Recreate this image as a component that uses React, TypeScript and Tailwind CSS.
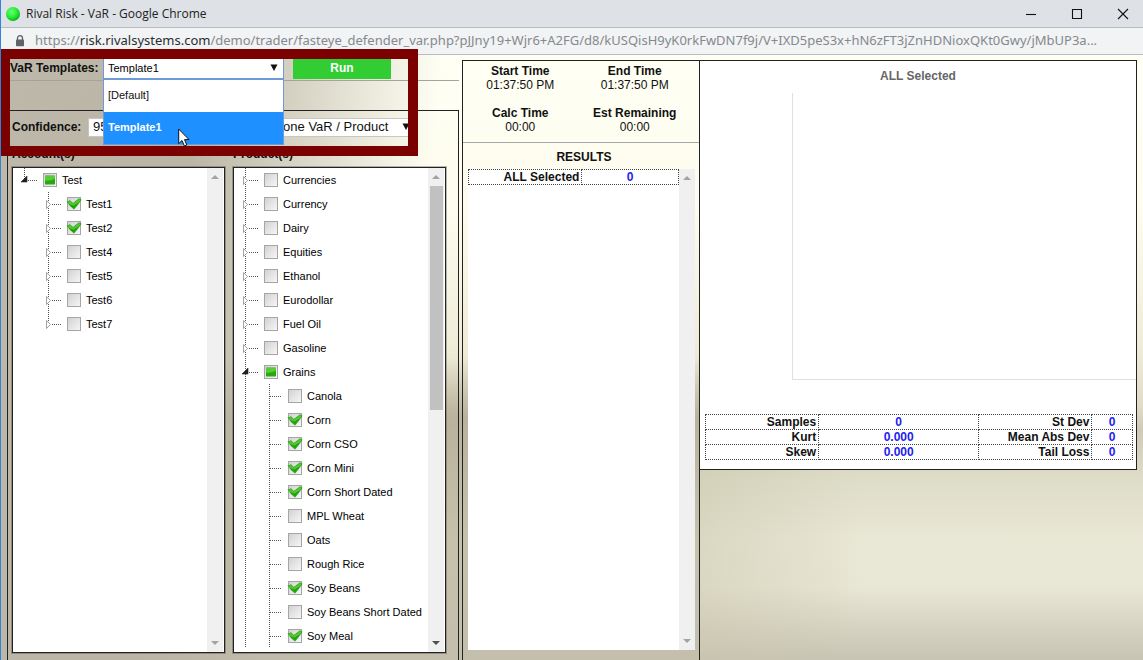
import { useEffect, useId, useRef } from "react";

type Mark = "off" | "on" | "mixed";
type Arrow = "closed" | "open" | "none";

interface TreeItem {
  label: string;
  mark: Mark;
  arrow: Arrow;
  depth: number;
  line: "full" | "end";
}

const accounts: TreeItem[] = [
  { label: "Test", mark: "mixed", arrow: "open", depth: 0, line: "end" },
  { label: "Test1", mark: "on", arrow: "closed", depth: 1, line: "full" },
  { label: "Test2", mark: "on", arrow: "closed", depth: 1, line: "full" },
  { label: "Test4", mark: "off", arrow: "closed", depth: 1, line: "full" },
  { label: "Test5", mark: "off", arrow: "closed", depth: 1, line: "full" },
  { label: "Test6", mark: "off", arrow: "closed", depth: 1, line: "full" },
  { label: "Test7", mark: "off", arrow: "closed", depth: 1, line: "end" },
];

const closedGroups = ["Currencies", "Currency", "Dairy", "Equities", "Ethanol", "Eurodollar", "Fuel Oil", "Gasoline"];

const grains: [string, Mark][] = [
  ["Canola", "off"],
  ["Corn", "on"],
  ["Corn CSO", "on"],
  ["Corn Mini", "on"],
  ["Corn Short Dated", "on"],
  ["MPL Wheat", "off"],
  ["Oats", "off"],
  ["Rough Rice", "off"],
  ["Soy Beans", "on"],
  ["Soy Beans Short Dated", "off"],
  ["Soy Meal", "on"],
];

const products: TreeItem[] = [
  ...closedGroups.map((label): TreeItem => ({ label, mark: "off", arrow: "closed", depth: 0, line: "full" })),
  { label: "Grains", mark: "mixed", arrow: "open", depth: 0, line: "full" },
  ...grains.map(([label, mark]): TreeItem => ({ label, mark, arrow: "none", depth: 1, line: "full" })),
];

function Connector({ arrow, line }: { arrow: Arrow; line: TreeItem["line"] }) {
  return (
    <svg className="h-6 w-6 shrink-0" viewBox="0 0 24 24" aria-hidden="true" shapeRendering="crispEdges">
      <path d={line === "end" ? "M5.5 0V12" : "M5.5 0V24"} stroke="#555" strokeDasharray="1 1" fill="none" />
      <path d={arrow === "none" ? "M6 12.5H18" : "M9 12.5H18"} stroke="#555" strokeDasharray="1 1" fill="none" />
      {arrow === "closed" && (
        <path d="M3.5 8.5L7.5 12.5L3.5 16.5Z" fill="#fff" stroke="#999" strokeWidth="0.9" shapeRendering="auto" />
      )}
      {arrow === "open" && <path d="M2 14L8 8V14Z" fill="#222" stroke="#222" strokeWidth="0.6" shapeRendering="auto" />}
    </svg>
  );
}

function Guide({ show }: { show: boolean }) {
  return (
    <svg className="h-6 w-6 shrink-0" viewBox="0 0 24 24" aria-hidden="true" shapeRendering="crispEdges">
      {show && <path d="M5.5 0V24" stroke="#555" strokeDasharray="1 1" fill="none" />}
    </svg>
  );
}

function TreeRow({ item, guide }: { item: TreeItem; guide: boolean }) {
  const id = useId();
  const box = useRef<HTMLInputElement>(null);
  useEffect(() => {
    if (box.current) box.current.indeterminate = item.mark === "mixed";
  }, [item.mark]);
  return (
    <li className="flex h-6 items-center">
      {item.depth === 1 && <Guide show={guide} />}
      <Connector arrow={item.arrow} line={item.line} />
      <span className="grid h-3.5 w-3.5 shrink-0 place-items-center">
        <input
          ref={box}
          id={id}
          type="checkbox"
          defaultChecked={item.mark === "on"}
          className="peer col-start-1 row-start-1 h-3.5 w-3.5 appearance-none border border-[#a5a5a5] bg-linear-to-br from-[#d2d2d2] to-[#f6f6f6]"
        />
        <svg
          className="pointer-events-none col-start-1 row-start-1 hidden h-3.5 w-3.5 overflow-visible peer-checked:block"
          viewBox="0 0 14 14"
          aria-hidden="true"
        >
          <path d="M-0.4 4.8L2.8 3.2L6 6L12 1.2L14.6 2.8Q11.4 7.6 7 12.4Q2.8 9.6 -0.4 4.8Z" fill="#23a30c" />
          <path d="M0.5 5L2.8 4L6 6.8L12 2L13.6 3L11.6 5.4L6.4 8.6L2 7Z" fill="#55c934" />
        </svg>
        <svg
          className="pointer-events-none col-start-1 row-start-1 hidden h-3.5 w-3.5 peer-indeterminate:block"
          viewBox="0 0 14 14"
          aria-hidden="true"
        >
          <rect x="2" y="2.6" width="10" height="8.8" rx="0.6" fill="#26a80e" />
          <path d="M2 3H12V5.6Q7 8.6 2 7.6Z" fill="#58cc38" />
        </svg>
      </span>
      <label htmlFor={id} className="pl-[5px] text-[11px] leading-4 whitespace-nowrap text-black">
        {item.label}
      </label>
    </li>
  );
}

function ScrollArrow({ up, color }: { up?: boolean; color: string }) {
  return (
    <svg className="mx-auto h-[18px] w-2 shrink-0" viewBox="0 0 8 18" aria-hidden="true">
      <path d={up ? "M0 11L4 7L8 11Z" : "M0 7L4 11L8 7Z"} fill={color} />
    </svg>
  );
}

function ScrollTrack({ thumb }: { thumb?: boolean }) {
  return (
    <div className="flex w-4 shrink-0 flex-col bg-[#f0f0f0]">
      <ScrollArrow up color="#a3a3a3" />
      <div className="flex-1">{thumb && <div className="ml-0.5 mr-px h-1/2 bg-[#c1c1c1]" />}</div>
      <ScrollArrow color={thumb ? "#505050" : "#a3a3a3"} />
    </div>
  );
}

function TreePanel({ title, items, guide, thumb }: { title: string; items: TreeItem[]; guide: boolean; thumb?: boolean }) {
  return (
    <section className="flex min-h-0 min-w-0 flex-1 flex-col">
      <h2 className="h-[23px] pt-0.5 text-xs leading-4 font-bold">{title}</h2>
      <div className="flex min-h-0 flex-1 border border-[#222] bg-white pr-px shadow-[0_0_0_1px_rgba(60,60,50,0.35)]">
        <ul className="min-w-0 flex-1 overflow-hidden pl-1.5">
          {items.map((item) => (
            <TreeRow key={item.label} item={item} guide={guide} />
          ))}
        </ul>
        <ScrollTrack thumb={thumb} />
      </div>
    </section>
  );
}

function Caret() {
  return (
    <svg className="pointer-events-none col-start-1 row-start-1 mr-1.5 h-2 w-2 self-center justify-self-end" viewBox="0 0 8 8" aria-hidden="true">
      <path d="M0.5 0.5H7.5L4 7Z" fill="#111" />
    </svg>
  );
}

function TitleBar() {
  return (
    <header>
      <div className="flex h-7 items-center border-b border-[#b9bcc0] bg-[#dee1e6] pl-[5px] text-[#222]">
        <svg className="h-3.5 w-3.5" viewBox="0 0 14 14" aria-hidden="true">
          <defs>
            <radialGradient id="orb" cx="0.4" cy="0.35" r="0.65">
              <stop offset="0" stopColor="#6dff75" />
              <stop offset="0.6" stopColor="#24ee34" />
              <stop offset="1" stopColor="#12b024" />
            </radialGradient>
          </defs>
          <circle cx="7" cy="7" r="7" fill="url(#orb)" />
        </svg>
        <h1 className="flex-1 pl-1.5 font-['Open_Sans',sans-serif] text-xs">Rival Risk - VaR - Google Chrome</h1>
        <div className="flex gap-[22px] pr-2">
          <button aria-label="Minimize" className="grid h-6 w-6 place-items-center">
            <svg className="h-3 w-3" viewBox="0 0 12 12"><path d="M1 6.5H11" stroke="#111" strokeWidth="1.1" /></svg>
          </button>
          <button aria-label="Maximize" className="grid h-6 w-6 place-items-center">
            <svg className="h-3 w-3" viewBox="0 0 12 12"><path d="M1.5 1.5H10.5V10.5H1.5Z" stroke="#111" strokeWidth="1.1" fill="none" /></svg>
          </button>
          <button aria-label="Close" className="grid h-6 w-6 place-items-center">
            <svg className="h-3 w-3" viewBox="0 0 12 12"><path d="M1 1L11 11M11 1L1 11" stroke="#111" strokeWidth="1.1" /></svg>
          </button>
        </div>
      </div>
      <div className="flex h-[27px] items-center border-b border-[#b9bcc0] bg-[#f1f3f4] pr-2 pl-3.5">
        <svg className="h-3 w-2.5 shrink-0" viewBox="0 0 10 12" aria-hidden="true">
          <path d="M2.5 5V3.2A2.5 2.5 0 0 1 7.5 3.2V5" fill="none" stroke="#5f6368" strokeWidth="1.3" />
          <rect x="1" y="4.6" width="8" height="6.6" rx="0.8" fill="#5f6368" />
        </svg>
        <p className="min-w-0 truncate pl-2.5 font-['Noto_Sans',sans-serif] text-[13px] text-[#85898d]">
          https://<span className="text-[#2b2d30]">risk.rivalsystems.com</span>
          /demo/trader/fasteye_defender_var.php?pJJny19+Wjr6+A2FG/d8/kUSQisH9yK0rkFwDN7f9j/V+IXD5peS3x+hN6zFT3jZnHDNioxQKt0Gwy/jMbUP3a...
        </p>
      </div>
    </header>
  );
}

function TemplateBar() {
  return (
    <div className="flex h-[26px] items-center border-b border-[#a5a49c] pl-[9px]">
      <label htmlFor="template" className="w-[93px] text-xs font-bold">VaR Templates:</label>
      <div className="relative w-[181px]">
        <div className="grid">
          <select
            id="template"
            defaultValue="Template1"
            className="col-start-1 row-start-1 h-[22px] w-full appearance-none border border-[#6f9ad8] bg-white pt-0.5 pl-1 text-[11px] text-black"
          >
            <option>[Default]</option>
            <option>Template1</option>
          </select>
          <Caret />
        </div>
        <ul role="listbox" aria-label="VaR Templates" className="absolute top-full left-0 z-20 w-full border border-[#6f9ad8] bg-white text-[11px]">
          <li role="option" aria-selected="false" className="flex h-8 items-center pl-1">[Default]</li>
          <li role="option" aria-selected="true" className="flex h-8 items-center bg-[#1e90ff] pl-1 font-bold text-white">Template1</li>
        </ul>
        <svg className="absolute top-[71px] left-[75px] z-40 h-5 w-3" viewBox="0 0 12 20" aria-hidden="true">
          <path d="M0.7 1V15.6L4 12.5L6.4 18L8.8 17L6.5 11.6H11Z" fill="#fff" stroke="#111" strokeWidth="1" />
        </svg>
      </div>
      <button className="ml-[9px] h-[22px] w-[98px] bg-[#32cd32] text-xs font-bold text-white">Run</button>
    </div>
  );
}

function ConfidenceBar() {
  return (
    <div className="flex h-8 items-center">
      <label htmlFor="confidence" className="w-[76px] text-xs font-bold">Confidence:</label>
      <select id="confidence" defaultValue="95%" className="h-[19px] w-20 appearance-none border border-[#c8c6bd] bg-white pl-1 text-[13px] leading-4">
        <option>95%</option>
        <option>99%</option>
      </select>
      <div className="ml-[60px] grid w-[188px]">
        <select
          aria-label="VaR method"
          defaultValue="Standalone VaR / Product"
          className="col-start-1 row-start-1 h-[19px] w-full appearance-none border border-[#c8c6bd] bg-white pl-2.5 text-[13px] leading-4"
        >
          <option>Standalone VaR / Product</option>
        </select>
        <Caret />
      </div>
    </div>
  );
}

const timings = [
  ["Start Time", "01:37:50 PM"],
  ["End Time", "01:37:50 PM"],
  ["Calc Time", "00:00"],
  ["Est Remaining", "00:00"],
];

function ResultsPanel() {
  return (
    <section className="flex min-h-0 w-[237px] shrink-0 flex-col border-t border-l border-[#222]">
      <dl className="grid h-[82px] grid-cols-2 content-start gap-y-3.5 border-b border-[#a9a9a9] pt-[3px] pr-[7px] text-center text-xs leading-[14px]">
        {timings.map(([name, value]) => (
          <div key={name}>
            <dt className="font-bold">{name}</dt>
            <dd>{value}</dd>
          </div>
        ))}
      </dl>
      <h2 className="h-[26px] pt-1.5 pl-1.5 text-center text-xs font-bold">RESULTS</h2>
      <div className="mr-1 mb-2.5 ml-[5px] flex min-h-0 flex-1 bg-white">
        <div className="flex-1">
          <table className="w-full border-collapse text-xs leading-[14px] font-bold">
            <tbody>
              <tr>
                <th className="w-[54%] border border-dotted border-[#444] p-0 pr-0.5 text-right">ALL Selected</th>
                <td className="border border-dotted border-[#444] p-0 text-center text-[#2222f0]">0</td>
              </tr>
            </tbody>
          </table>
        </div>
        <ScrollTrack />
      </div>
    </section>
  );
}

const stats = [
  ["Samples", "0", "St Dev", "0"],
  ["Kurt", "0.000", "Mean Abs Dev", "0"],
  ["Skew", "0.000", "Tail Loss", "0"],
];

function ChartPanel() {
  return (
    <section className="flex min-w-0 flex-1 border-l border-[#222]">
      <div className="flex h-[410px] flex-1 flex-col border-t border-r border-b border-[#222] bg-white pb-[9px]">
        <h2 className="h-8 pt-1.5 text-center text-xs leading-[18px] font-bold text-[#666]">ALL Selected</h2>
        <div className="ml-[92px] flex-1 border-b border-l border-[#e0e0e0]" />
        <table className="mt-[34px] mr-[3px] ml-[5px] table-fixed border-collapse text-xs leading-[14px] font-bold">
          <colgroup>
            <col className="w-[26.5%]" />
            <col className="w-[37.5%]" />
            <col className="w-[26.5%]" />
            <col />
          </colgroup>
          <tbody>
            {stats.map(([a, x, b, y]) => (
              <tr key={a}>
                <th className="border border-dotted border-[#444] p-0 pr-0.5 text-right">{a}</th>
                <td className="border border-dotted border-[#444] p-0 text-center text-[#2222f0]">{x}</td>
                <th className="border border-dotted border-[#444] p-0 pr-0.5 text-right">{b}</th>
                <td className="border border-dotted border-[#444] p-0 text-center text-[#2222f0]">{y}</td>
              </tr>
            ))}
          </tbody>
        </table>
      </div>
    </section>
  );
}

export default function App() {
  return (
    <div className="relative flex h-screen flex-col overflow-hidden border-l border-[#2f86d6] bg-white font-['Liberation_Sans',Arial,sans-serif] text-[#111]">
      <TitleBar />
      <main className="flex min-h-0 flex-1 bg-[linear-gradient(97deg,#bdb8a9_0,#bab5a5_200px,transparent_440px),linear-gradient(180deg,transparent_50%,#b9b39d_60%,#c6c1ab_80%,#c4bfad_100%),linear-gradient(90deg,rgba(200,196,170,0.45)_699px,transparent_860px),linear-gradient(180deg,#fffff4_0,#fdfcee_25%,#efecd8_48%,#e0dcc6_58%,#cfcab5_62%,#deddc8_70%,#e9e7d5_80%,#e8e6d4_88%,#c8c4b4_100%)] bg-[size:100%_100%,699px_100%,100%_32%,100%_100%] bg-[position:0_0,0_0,0_100%,0_0] bg-no-repeat pr-1.5">
        <div className="flex min-w-0 flex-1 flex-col">
          <TemplateBar />
          <div className="h-[29px]" />
          <div className="ml-1.5 flex min-h-0 flex-1 flex-col border border-b-0 border-[#222] pr-3 pb-[7px] pl-1">
            <ConfidenceBar />
            <div className="mt-px flex min-h-0 flex-1 gap-2">
              <TreePanel title="Account(s)" items={accounts} guide={false} />
              <TreePanel title="Product(s)" items={products} guide thumb />
            </div>
          </div>
        </div>
        <div className="mt-[5px] ml-[3px] flex min-h-0">
          <ResultsPanel />
        </div>
        <div className="mt-[5px] flex w-[438px]">
          <ChartPanel />
        </div>
      </main>
      <div className="pointer-events-none absolute top-[49px] -left-px z-10 h-[107px] w-[418px] border-10 border-[#7b0000]" />
    </div>
  );
}
